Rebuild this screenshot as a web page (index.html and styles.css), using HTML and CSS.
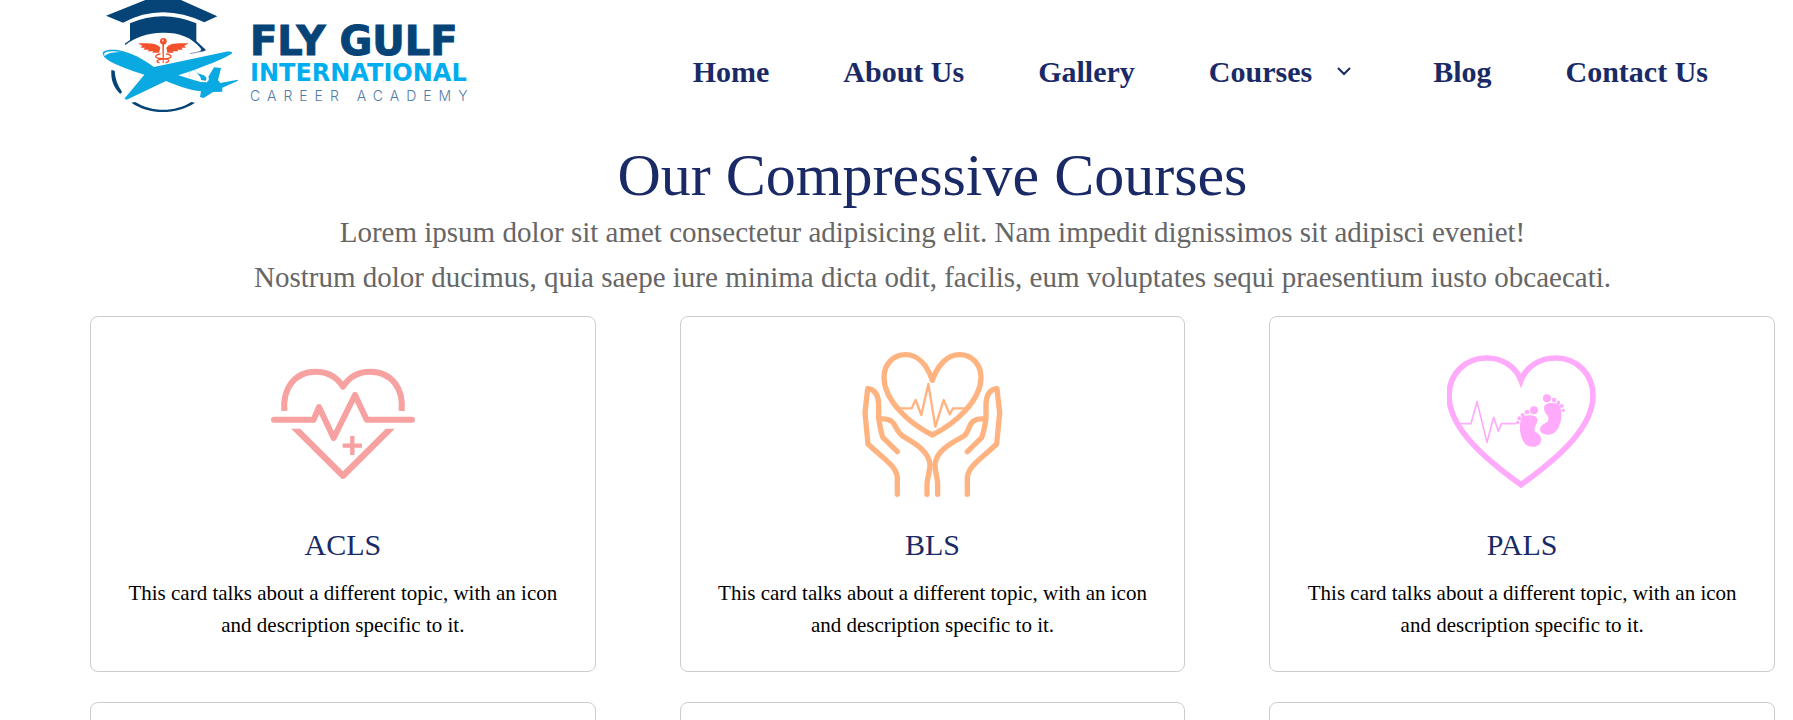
FILE: index.html
```html
<!DOCTYPE html>
<html lang="en">
<head>
<meta charset="utf-8">
<title>Fly Gulf International Career Academy</title>
<link rel="stylesheet" href="styles.css">
</head>
<body>
<header class="header">
  <a class="logo" href="#">
    <svg class="logo-mark" viewBox="0 0 450 342" aria-hidden="true">
      <g fill="#064478">
        <path d="M48 47 176 -4H264L382 49 343 67Q215 6 99 68Z"/>
        <path d="M120 70Q217 28 319 70V123L348 150 341 154 320 156Q338 152 333 146C305 110 264 97 218 98 170 99 135 112 106 135L104 131 120 120Z"/>
        <path d="M64 210 74 212C75 236 83 257 96 275L91 282C70 262 62 238 64 210Z"/>
        <path d="M124 308 136 306C185 337 255 337 304 306L315 308C260 345 178 346 124 308Z"/>
      </g>
      <path fill="#0aa9e2" d="M38 160C38 150 60 147 85 150 125 158 160 178 192 201L408 155C420 154 427 156 427 160 405 175 340 202 265 226L304 238 332 246 350 247Q360 239 355 230L372 202 393 204 384 241 391 249 443 239 444 242 397 263V275L369 276 341 294 330 291 333 274C300 271 260 256 228 243L110 299 103 296 163 224C115 208 60 190 42 170Z"/>
      <path fill="#fff" d="M43 160C48 153 68 152 95 156 73 156 55 158 43 169Z"/>
      <path fill="none" stroke="#a9def4" stroke-width="2" d="M299 232Q294 214 312 211L324 219"/>
      <path fill="#0aa9e2" d="M320 219 342 226Q354 235 347 242L333 240Q334 231 320 219Z"/>
      <g fill="#f3502c">
        <path d="M144 129C164 132 198 125 211 143L207 158H187L190 154H173L177 149H160L165 143H151L157 138Z"/>
        <path d="M296 129C274 132 242 125 229 143L232 158H251L248 154H265L262 149H278L275 143H288L283 138Z"/>
        <circle cx="220" cy="124" r="10"/>
        <path d="M217 132H222L221 190H218Z"/>
      </g>
      <path fill="none" stroke="#f3502c" stroke-width="4" stroke-linecap="round" d="M210 162C190 166 193 176 218 176 240 177 240 184 228 188M230 162C251 166 246 176 220 177 197 179 198 186 207 188"/>
      <path fill="#fff" d="M216 120 221 118 219 126Z"/>
      <path fill="none" stroke="#4b6e98" stroke-width="2" d="M300 161 340 153"/>
    </svg>
    <span class="logo-text">
      <span class="logo-name">FLY GULF</span>
      <span class="logo-scope">INTERNATIONAL</span>
      <span class="logo-kind">CAREER ACADEMY</span>
    </span>
  </a>
  <nav class="nav" aria-label="Main">
    <a href="#">Home</a>
    <a href="#">About Us</a>
    <a href="#">Gallery</a>
    <div class="nav-group">
      <a href="#">Courses</a>
      <button class="nav-toggle" type="button" aria-label="Show courses">
        <svg viewBox="0 0 30 30" aria-hidden="true"><path d="m9 11 6 6 6-6"/></svg>
      </button>
    </div>
    <a href="#">Blog</a>
    <a href="#">Contact Us</a>
  </nav>
</header>
<main class="courses">
  <h1 class="title">Our Compressive Courses</h1>
  <p class="intro">Lorem ipsum dolor sit amet consectetur adipisicing elit. Nam impedit dignissimos sit adipisci eveniet!<br>Nostrum dolor ducimus, quia saepe iure minima dicta odit, facilis, eum voluptates sequi praesentium iusto obcaecati.</p>
  <div class="cards">
    <article class="card">
      <svg class="card-icon acls" viewBox="24 -12 450 450" aria-hidden="true">
        <path stroke-width="19" stroke-linejoin="round" d="M92 218 249 374 406 218"/>
        <path class="gap" d="M70 205H430V233H70Z"/>
        <g stroke-width="18" stroke-linejoin="round">
          <path d="M73 180C68 120 98 62 166 62 201 62 231 78 249 107 267 78 296 62 331 62 400 62 431 120 425 180"/>
          <path stroke-linecap="round" d="M42 206H161L177 168 221 261 285 132 320 206H456"/>
        </g>
        <path stroke-width="13" d="M277 255V312M248 284H306"/>
      </svg>
      <h2 class="card-title">ACLS</h2>
      <p class="card-text">This card talks about a different topic, with an icon and description specific to it.</p>
    </article>
    <article class="card">
      <svg class="card-icon bls" viewBox="23 18 450 450" aria-hidden="true">
        <g stroke-width="16" stroke-linecap="round" stroke-linejoin="round">
          <path d="M249 118C233 72 205 41 169 41 131 41 104 70 104 109 104 180 181 248 249 282 317 248 395 180 395 109 395 70 368 41 330 41 294 41 265 72 249 118Z"/>
          <path d="M144 460V408C139 373 99 350 56 309L47 216 55 143C76 145 87 160 88 190V232C91 250 94 272 101 290L144 332M93 234C145 230 132 266 159 284 188 304 236 325 242 369 243 392 233 408 233 430V460"/>
          <path d="M354 460V408C359 373 399 350 442 309L451 216 443 143C422 145 411 160 410 190V232C407 250 404 272 397 290L354 332M405 234C353 230 366 266 345 284 312 304 262 325 257 369 256 392 265 408 265 430V460"/>
          <path stroke-width="7" d="M154 202H187L199 177 216 222 237 129 258 257 283 177 301 220 311 202H344"/>
        </g>
      </svg>
      <h2 class="card-title">BLS</h2>
      <p class="card-text">This card talks about a different topic, with an icon and description specific to it.</p>
    </article>
    <article class="card">
      <svg class="card-icon pals" viewBox="54 18 450 450" aria-hidden="true">
        <path stroke-width="17" d="M276 118C260 75 218 51 173 51 108 51 60 99 60 164 60 260 166 352 276 431 386 352 492 260 492 164 492 99 444 51 380 51 334 51 292 75 276 118Z"/>
        <path stroke-width="5" stroke-linejoin="round" d="M94 248H126L144 182 174 304 194 229 208 271 217 248H262"/>
        <g class="solid">
          <path d="M281 226C298 221 323 220 325 235 326 250 310 262 319 273 332 278 338 288 336 300 331 318 314 320 297 315 273 303 265 248 281 226Z"/>
          <path d="M345 202C344 184 370 183 386 190 407 205 396 263 376 275 363 284 338 284 333 268 332 253 346 250 357 240 364 224 346 222 345 202Z"/>
          <circle cx="315" cy="208" r="12"/><circle cx="294" cy="213" r="7"/><circle cx="281" cy="222" r="6"/><circle cx="271" cy="232" r="6"/><circle cx="266" cy="244" r="5"/>
          <circle cx="354" cy="172" r="12"/><circle cx="375" cy="177" r="7"/><circle cx="388" cy="185" r="6"/><circle cx="398" cy="195" r="6"/><circle cx="403" cy="208" r="5"/>
        </g>
      </svg>
      <h2 class="card-title">PALS</h2>
      <p class="card-text">This card talks about a different topic, with an icon and description specific to it.</p>
    </article>
    <article class="card"></article>
    <article class="card"></article>
    <article class="card"></article>
  </div>
</main>
</body>
</html>
```
FILE: styles.css
```css
* {
  box-sizing: border-box;
  margin: 0;
  padding: 0;
}

body {
  background: #fff;
  color: #000;
  font-family: "Liberation Serif", "Times New Roman", serif;
}

a {
  color: inherit;
  text-decoration: none;
}

.header {
  display: flex;
  justify-content: space-between;
  align-items: center;
  min-height: 141px;
  padding: 0 85px 0 90px;
}

.logo {
  display: flex;
  align-self: flex-start;
  gap: 10px;
  font-family: "DejaVu Sans", sans-serif;
}

.logo-mark {
  width: 150px;
  height: 114px;
}

.logo-text {
  display: flex;
  flex-direction: column;
  padding-top: 21px;
  white-space: nowrap;
}

.logo-name {
  color: #064478;
  font-size: 40px;
  font-weight: 700;
  line-height: 40px;
  -webkit-text-stroke: 1px #064478;
}

.logo-scope {
  color: #00aeef;
  font-size: 24px;
  font-weight: 700;
  line-height: 24px;
}

.logo-kind {
  color: #4f7ba6;
  font-family: Inter, sans-serif;
  font-size: 14px;
  font-weight: 300;
  letter-spacing: 7px;
  line-height: 22px;
}

.nav {
  display: flex;
  align-items: center;
  gap: 74px;
  padding-top: 2px;
  color: #1a2a66;
  font-size: 30px;
  font-weight: 700;
  white-space: nowrap;
}

.nav-group {
  display: flex;
  align-items: center;
  gap: 17px;
}

.nav-toggle {
  width: 30px;
  height: 30px;
  border: 0;
  background: none;
  color: inherit;
  cursor: pointer;
}

.nav-toggle svg {
  display: block;
  fill: none;
  stroke: currentColor;
  stroke-width: 2;
}

.courses {
  padding: 0 18px 30px 90px;
}

.title {
  color: #1a2a66;
  font-size: 60px;
  font-weight: 400;
  text-align: center;
}

.intro {
  color: #666;
  font-size: 29px;
  line-height: 45px;
  text-align: center;
}

.cards {
  display: grid;
  grid-template-columns: repeat(3, 1fr);
  gap: 30px 84px;
  margin-top: 16px;
}

.card {
  display: flex;
  flex-direction: column;
  align-items: center;
  min-height: 356px;
  padding: 30px 36px;
  border: 1px solid #ccc;
  border-radius: 8px;
  text-align: center;
}

.card-icon {
  width: 150px;
  height: 150px;
  margin-bottom: 31px;
  fill: none;
  stroke: currentColor;
}

.acls {
  color: #f7a1a1;
}

.bls {
  color: #ffb380;
}

.pals {
  color: #ffaafb;
}

.gap {
  fill: #fff;
  stroke: none;
}

.solid {
  fill: currentColor;
  stroke: none;
}

.card-title {
  margin-bottom: 15px;
  color: #1a2a66;
  font-size: 30px;
  font-weight: 400;
}

.card-text {
  font-size: 21px;
  line-height: 32px;
}
```
